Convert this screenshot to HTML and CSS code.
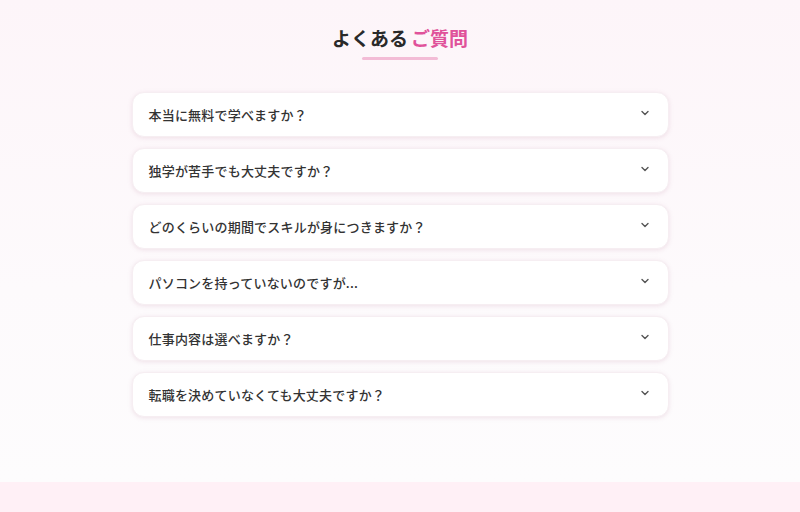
FILE: index.html
```html
<!DOCTYPE html>
<html lang="ja">
<head>
    <meta charset="UTF-8">
    <meta name="viewport" content="width=device-width, initial-scale=1.0">
    <title>よくあるご質問</title>
    <link rel="stylesheet" href="styles.css">
</head>
<body>

<section class="faq">
    <h2 class="faq-title">よくある<span class="accent">ご質問</span></h2>
    <div class="faq-line"></div>

    <div class="faq-list">
        <div class="faq-item">
            <span class="faq-q">本当に無料で学べますか？</span>
            <svg class="chevron" viewBox="0 0 12 12"><path d="M3 4.5 L6 7.5 L9 4.5"/></svg>
        </div>
        <div class="faq-item">
            <span class="faq-q">独学が苦手でも大丈夫ですか？</span>
            <svg class="chevron" viewBox="0 0 12 12"><path d="M3 4.5 L6 7.5 L9 4.5"/></svg>
        </div>
        <div class="faq-item">
            <span class="faq-q">どのくらいの期間でスキルが身につきますか？</span>
            <svg class="chevron" viewBox="0 0 12 12"><path d="M3 4.5 L6 7.5 L9 4.5"/></svg>
        </div>
        <div class="faq-item">
            <span class="faq-q">パソコンを持っていないのですが...</span>
            <svg class="chevron" viewBox="0 0 12 12"><path d="M3 4.5 L6 7.5 L9 4.5"/></svg>
        </div>
        <div class="faq-item">
            <span class="faq-q">仕事内容は選べますか？</span>
            <svg class="chevron" viewBox="0 0 12 12"><path d="M3 4.5 L6 7.5 L9 4.5"/></svg>
        </div>
        <div class="faq-item">
            <span class="faq-q">転職を決めていなくても大丈夫ですか？</span>
            <svg class="chevron" viewBox="0 0 12 12"><path d="M3 4.5 L6 7.5 L9 4.5"/></svg>
        </div>
    </div>
</section>

<section class="next-section"></section>

</body>
</html>
```

FILE: styles.css
```css
:root {
    --pink: #e0529a;
    --pink-light: #f3bcd6;
    --text-color: #333;
    --card-shadow: 0 1px 4px rgba(200, 150, 175, 0.25);
}

body {
    margin: 0;
    font-family: 'Noto Sans CJK JP', 'Noto Sans', sans-serif;
    color: var(--text-color);
    background: #fdfcfd;
}

.faq {
    height: 482px;
    box-sizing: border-box;
    padding-top: 23px;
    background: linear-gradient(to bottom, #fdf5f9 0%, #fdfafc 60%, #fdfcfd 100%);
}

.faq-title {
    margin: 0;
    font-size: 19px;
    font-weight: 700;
    line-height: 30px;
    text-align: center;
    color: #2a2a2a;
}

.accent {
    margin-left: 3px;
    color: var(--pink);
}

.faq-line {
    width: 76px;
    height: 3px;
    margin: 4px auto 0;
    border-radius: 2px;
    background: var(--pink-light);
}

.faq-list {
    width: 537px;
    margin: 32px auto 0;
    display: flex;
    flex-direction: column;
    gap: 11px;
}

.faq-item {
    height: 45px;
    box-sizing: border-box;
    padding: 0 17px 0 16px;
    display: flex;
    align-items: center;
    justify-content: space-between;
    background: #fff;
    border: 1px solid #f6eef2;
    border-radius: 12px;
    box-shadow: var(--card-shadow);
}

.faq-q {
    font-size: 13px;
    font-weight: 500;
    letter-spacing: 0.2px;
}

.chevron {
    width: 12px;
    height: 12px;
    margin-top: -4px;
    fill: none;
    stroke: #555;
    stroke-width: 1.4;
    stroke-linecap: round;
    stroke-linejoin: round;
}

.next-section {
    height: 30px;
    background: #fff0f6;
}
```
